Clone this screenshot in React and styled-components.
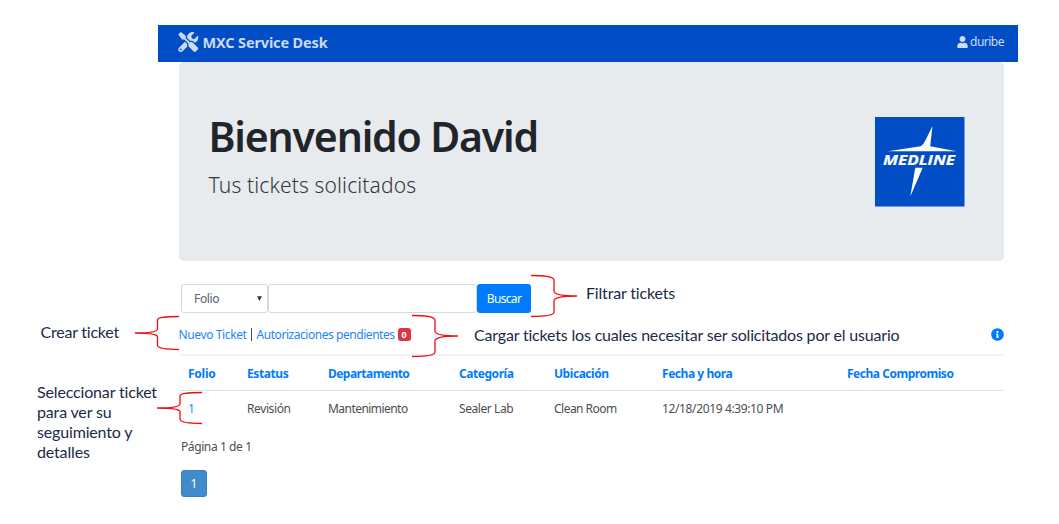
import React from "react";
import styled, { createGlobalStyle } from "styled-components";
import { FaTools, FaUser, FaInfoCircle } from "react-icons/fa";

const GlobalStyle = createGlobalStyle`
  * { box-sizing: border-box; }
  body {
    margin: 0;
    background: #fff;
    color: #4a4e52;
    font-family: "Noto Sans", "Open Sans", sans-serif;
    font-size: 12px;
  }
`;

const Page = styled.div`
  position: relative;
  width: 1059px;
  height: 524px;
  padding: 25px 41px 0 158px;
  overflow: hidden;
`;

const Navbar = styled.header`
  display: flex;
  align-items: center;
  justify-content: space-between;
  height: 37px;
  padding: 0 14px 4px 20px;
  background: #004dc6;
  color: #ccdbf4;
`;

const Brand = styled.div`
  display: flex;
  align-items: center;
  gap: 4px;
  line-height: 18px;
  font-size: 14.5px;
  font-weight: 700;
  letter-spacing: -0.15px;
  svg { width: 20.5px; height: 20px; }
`;

const UserLink = styled.div`
  display: flex;
  align-items: center;
  gap: 2px;
  letter-spacing: -0.5px;
  svg { width: 11px; height: 12px; }
`;

const Content = styled.main`
  padding: 0 14px 0 20.5px;
`;

const Jumbotron = styled.section`
  display: flex;
  align-items: flex-start;
  justify-content: space-between;
  height: 198.5px;
  padding: 55px 39.5px 0 30px;
  border-radius: 5px;
  background: #e8ebee;
`;

const Title = styled.h1`
  margin: -2px 0 0;
  height: 46px;
  line-height: 42px;
  font-size: 41px;
  font-weight: 600;
  letter-spacing: -1.17px;
  color: #212529;
`;

const Lead = styled.p`
  margin: 10px 0 0;
  line-height: 28px;
  font-size: 21px;
  font-weight: 300;
  letter-spacing: 0.14px;
  color: #32373c;
`;

const Logo = styled.svg`
  display: block;
  width: 89.5px;
  height: 89.5px;
`;

const SearchBar = styled.form`
  display: flex;
  height: 29px;
  margin: 23.5px 0 0 2.5px;
`;

const Select = styled.div`
  display: flex;
  align-items: center;
  justify-content: space-between;
  width: 87px;
  padding: 0 5px 0 12px;
  border: 1px solid #d5dae0;
  border-radius: 3px;
  color: #5a626a;
  letter-spacing: -0.35px;
  svg { width: 5px; height: 5px; }
`;

const Input = styled.input`
  width: 209px;
  border: 1px solid #d5dae0;
  border-radius: 3px;
  background: #fff;
`;

const Button = styled.button`
  width: 54px;
  padding: 0;
  border: 0;
  border-radius: 3px;
  background: #007bff;
  color: #fff;
  font: inherit;
  letter-spacing: -0.65px;
`;

const LinkBar = styled.nav`
  display: flex;
  align-items: center;
  height: 42px;
  white-space: pre;
`;

const Link = styled.a`
  color: #2386f9;
  letter-spacing: ${(p) => p.$tracking}px;
`;

const Separator = styled.span`
  width: 1px;
  height: 13px;
  margin: 1px 5px 0 4px;
  background: #4a4e52;
`;

const Badge = styled.span`
  display: flex;
  align-items: center;
  justify-content: center;
  width: 13px;
  height: 13px;
  margin-left: 3px;
  border-radius: 3px;
  background: #dc3545;
  color: #fff;
  font-size: 9px;
  font-weight: 700;
`;

const InfoIcon = styled(FaInfoCircle)`
  width: 13px;
  height: 13px;
  margin-left: auto;
  color: #007bff;
`;

const Table = styled.div`
  margin-top: -1px;
  border-top: 2px solid #f4f4f5;
`;

const Row = styled.div`
  display: grid;
  grid-template-columns: 59px 81px 131px 95px 108px 185px 1fr;
  align-items: center;
  height: 35px;
  border-bottom: ${(p) => (p.$head ? "1px solid #dee2e6" : "0")};
`;

const Cell = styled.div`
  padding-left: 9.5px;
  white-space: nowrap;
  letter-spacing: ${(p) => p.$tracking}px;
  color: ${(p) => (p.$head ? "#007bff" : p.$link ? "#2386f9" : "#4a4e52")};
  font-weight: ${(p) => (p.$head ? 700 : 400)};
`;

const PageInfo = styled.p`
  margin: 13px 0 0 2.5px;
  line-height: 16px;
  letter-spacing: -0.4px;
`;

const PageButton = styled.button`
  display: block;
  width: 26px;
  height: 27px;
  margin: 15px 0 0 2.5px;
  padding: 0;
  border: 1px solid #3a80bf;
  border-radius: 3px;
  background: #428bca;
  color: #fff;
  font: inherit;
`;

const Note = styled.div`
  position: absolute;
  left: ${(p) => p.$x}px;
  top: ${(p) => p.$y}px;
  white-space: nowrap;
  line-height: 20px;
  font-family: Lato, "Open Sans", sans-serif;
  font-size: 16px;
  letter-spacing: ${(p) => p.$tracking}px;
  color: #1b2a47;
`;

const Braces = styled.svg`
  position: absolute;
  left: 0;
  top: 0;
  pointer-events: none;
`;

const columns = [
  ["Folio", -0.25],
  ["Estatus", -0.4],
  ["Departamento", -0.55],
  ["Categoría", -0.45],
  ["Ubicación", -0.45],
  ["Fecha y hora", -0.45],
  ["Fecha Compromiso", -0.47],
];

const ticket = [
  ["1", 0],
  ["Revisión", -0.4],
  ["Mantenimiento", -0.55],
  ["Sealer Lab", -0.42],
  ["Clean Room", -0.52],
  ["12/18/2019 4:39:10 PM", -0.37],
  ["", 0],
];

const notes = [
  { x: 40.5, y: 322, lines: ["Crear ticket"], tracking: -0.22 },
  { x: 586, y: 283, lines: ["Filtrar tickets"], tracking: -0.17 },
  {
    x: 474,
    y: 325,
    lines: ["Cargar tickets los cuales necesitar ser solicitados por el usuario"],
    tracking: -0.18,
  },
  {
    x: 37,
    y: 382,
    lines: ["Seleccionar ticket", "para ver su", "seguimiento y", "detalles"],
    tracking: -0.16,
  },
];

const MedlineLogo = () => (
  <Logo viewBox="0 0 90 90">
    <rect width="90" height="90" fill="#004dc6" />
    <path d="M13 34.4 L46 29.5 Q49 27.5 50.5 24 L57.8 9 L55.5 29.5 L82 34.4 Z" fill="#fff" />
    <path d="M40.5 51 H48 L35.5 80 Z" fill="#fff" />
    <text
      x="8"
      y="48"
      fill="#fff"
      stroke="#fff"
      strokeWidth="0.2"
      fontFamily="Open Sans, sans-serif"
      fontSize="14.8"
      fontWeight="700"
      fontStyle="italic"
      textLength="72.5"
      lengthAdjust="spacingAndGlyphs"
    >
      MEDLINE
    </text>
  </Logo>
);

export default function App() {
  return (
    <Page>
      <GlobalStyle />
      <Navbar>
        <Brand>
          <FaTools />
          MXC Service Desk
        </Brand>
        <UserLink>
          <FaUser />
          duribe
        </UserLink>
      </Navbar>
      <Content>
        <Jumbotron>
          <div>
            <Title>Bienvenido David</Title>
            <Lead>Tus tickets solicitados</Lead>
          </div>
          <MedlineLogo />
        </Jumbotron>
        <SearchBar>
          <Select>
            Folio
            <svg viewBox="0 0 5 5">
              <path d="M0 0.3 H5 L2.5 5 Z" fill="#343a40" />
            </svg>
          </Select>
          <Input />
          <Button type="button">Buscar</Button>
        </SearchBar>
        <LinkBar>
          <Link $tracking={-0.38}>Nuevo Ticket</Link>
          <Separator />
          <Link $tracking={-0.45}>Autorizaciones pendientes</Link>
          <Badge>0</Badge>
          <InfoIcon />
        </LinkBar>
        <Table>
          <Row $head>
            {columns.map(([label, tracking]) => (
              <Cell key={label} $head $tracking={tracking}>
                {label}
              </Cell>
            ))}
          </Row>
          <Row>
            {ticket.map(([value, tracking], i) => (
              <Cell key={i} $link={i === 0} $tracking={tracking}>
                {value}
              </Cell>
            ))}
          </Row>
        </Table>
        <PageInfo>Página 1 de 1</PageInfo>
        <PageButton type="button">1</PageButton>
      </Content>
      {notes.map((note) => (
        <Note key={note.lines[0]} $x={note.x} $y={note.y} $tracking={note.tracking}>
          {note.lines.map((line) => (
            <div key={line}>{line}</div>
          ))}
        </Note>
      ))}
      <Braces width="1059" height="524" fill="none" stroke="#f00d0d" strokeWidth="1.3">
        <path d="M179 316.5 Q157.5 316.5 157.5 320 V329 Q157.5 333 135 333 Q157.5 333 157.5 337 V345 Q157.5 349.5 179 349.5" />
        <path d="M202 392.5 Q180 392.5 180 396 V404 Q180 408 157 408 Q180 408 180 412 V419 Q180 423.5 202 423.5" />
        <path d="M531 275.5 Q554 275.5 554 280 V291 Q554 296 577 296 Q554 296 554 301 V312 Q554 316.5 531 316.5" />
        <path d="M412 315.5 Q435 315.5 435 320 V331 Q435 336 458 336 Q435 336 435 341 V352 Q435 356.5 412 356.5" />
      </Braces>
    </Page>
  );
}
